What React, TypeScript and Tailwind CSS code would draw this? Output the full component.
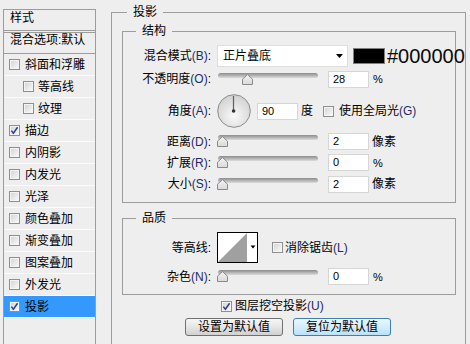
import React from "react";

function Check({ checked }: { checked?: boolean }) {
  return (
    <svg width="11" height="11" viewBox="0 0 11 11" className="shrink-0 block">
      <defs>
        <linearGradient id="cbg" x1="0" y1="0" x2="1" y2="1">
          <stop offset="0" stopColor="#d6d6d6" />
          <stop offset="1" stopColor="#f7f7f7" />
        </linearGradient>
      </defs>
      <rect x="0.5" y="0.5" width="10" height="10" fill="#f4f4f4" stroke="#8e8f8f" />
      <rect x="2" y="2" width="7" height="7" fill="url(#cbg)" />
      {checked && (
        <path d="M2.3 5.6 L4.4 8.2 L8.6 2.2" fill="none" stroke="#2b3f8f" strokeWidth="1.5" />
      )}
    </svg>
  );
}

function Thumb() {
  return (
    <svg width="11" height="11" viewBox="0 0 11 11" className="block">
      <defs>
        <linearGradient id="thg" x1="0" y1="0" x2="0" y2="1">
          <stop offset="0" stopColor="#f4f4f4" />
          <stop offset="1" stopColor="#d9d9d9" />
        </linearGradient>
      </defs>
      <path d="M5.5 0.6 L10.5 5.2 L10.5 10.5 L0.5 10.5 L0.5 5.2 Z" fill="url(#thg)" stroke="#8a8a8a" />
    </svg>
  );
}

function Slider({ value }: { value: number }) {
  return (
    <div className="relative w-[102px] h-[13px] shrink-0">
      <div className="mx-[1px] h-[5px] rounded-full bg-linear-to-b from-[#8c8c8c] to-[#dcdcdc]" />
      <div className="absolute top-[1px]" style={{ left: Math.round((value / 100) * 89) }}>
        <Thumb />
      </div>
    </div>
  );
}

function Field({ v }: { v: string }) {
  return (
    <div className="w-[41px] h-[17px] bg-white border border-[#d6d6d6] pl-[4px] flex items-center text-[11px] leading-none shrink-0">
      {v}
    </div>
  );
}

function L({ zh, k }: { zh: string; k?: string }) {
  return (
    <span className="whitespace-nowrap">
      {zh}
      {k && <span className="text-[#1c2a66]">({k})</span>}
      {k !== undefined || true ? ":" : ""}
    </span>
  );
}

function Lbl({ zh, k }: { zh: string; k?: string }) {
  return (
    <div className="w-[88px] text-right whitespace-nowrap shrink-0">
      {zh}
      {k && <span className="text-[#1c2a66]">({k})</span>}:
    </div>
  );
}

const listItems: { t: string; c?: boolean; indent?: boolean; sel?: boolean }[] = [
  { t: "斜面和浮雕" },
  { t: "等高线", indent: true },
  { t: "纹理", indent: true },
  { t: "描边", c: true },
  { t: "内阴影" },
  { t: "内发光" },
  { t: "光泽" },
  { t: "颜色叠加" },
  { t: "渐变叠加" },
  { t: "图案叠加" },
  { t: "外发光" },
  { t: "投影", c: true, sel: true },
];

export default function App() {
  void L;
  return (
    <div className="w-[470px] h-[344px] overflow-hidden bg-[#eeeeee] flex items-start text-[12px] leading-[16px] text-black font-['Liberation_Sans','Noto_Sans_CJK_SC',sans-serif]">
      {/* left style list */}
      <div className="ml-[3px] mt-[9px] w-[93px] h-[400px] border border-[#9c9c9c] flex flex-col shrink-0">
        <div className="h-[23px] border-b-[3px] border-double border-[#9c9c9c] pl-[6px] pt-[1px] leading-[14px] text-[12px]">
          样式
        </div>
        <div className="h-[21px] border-b border-[#9c9c9c] pl-[6px] pt-[1px] leading-[12px] whitespace-nowrap">
          混合选项:默认
        </div>
        {listItems.map((it) => (
          <div
            key={it.t}
            className={
              "h-[22px] border-b border-[#fbfbfb] flex items-center " +
              (it.indent ? "pl-[19px] " : "pl-[5px] ") +
              (it.sel ? "bg-[#3399ff]" : "")
            }
          >
            <Check checked={it.c} />
            <span className={it.indent ? "ml-[4px]" : "ml-[5px]"}>{it.t}</span>
          </div>
        ))}
      </div>

      {/* right main group */}
      <fieldset className="ml-[15px] mt-[4px] w-[355px] h-[400px] border border-[#9c9c9c] pl-[10px] pr-[9px] shrink-0 min-w-0">
        <legend className="ml-[5px] px-[6px] leading-[16px]">投影</legend>

        <fieldset className="mt-[3px] border border-[#9c9c9c] min-w-0">
          <legend className="ml-[13px] px-[6px] leading-[16px]">结构</legend>
          <div className="flex flex-col pt-[6px] pb-[7px]">
            <div className="h-[22px] flex items-center">
              <Lbl zh="混合模式" k="B" />
              <div className="ml-[6px] w-[131px] h-[22px] bg-white border border-[#dedede] flex items-center justify-between pl-[5px] pr-[4px] shrink-0">
                <span>正片叠底</span>
                <svg width="7" height="4" viewBox="0 0 7 4" className="block">
                  <path d="M0 0H7L3.5 4Z" fill="#000" />
                </svg>
              </div>
              <div className="ml-[5px] w-[32px] h-[16px] bg-black border border-[#808080] shrink-0" />
              <span className="ml-[2px] text-[20px] leading-[20px] whitespace-nowrap text-[#0a0a0a]">#000000</span>
            </div>

            <div className="mt-[1px] h-[22px] flex items-center">
              <Lbl zh="不透明度" k="O" />
              <div className="ml-[6px] flex items-center">
                <Slider value={28} />
                <div className="ml-[9px]">
                  <Field v="28" />
                </div>
                <span className="ml-[4px] text-[11px]">%</span>
              </div>
            </div>

            <div className="mt-[4px] h-[34px] flex items-center">
              <Lbl zh="角度" k="A" />
              <div className="ml-[6px] flex items-center">
                <svg width="34" height="34" viewBox="0 0 34 34" className="block shrink-0">
                  <defs>
                    <radialGradient id="dialg" cx="0.5" cy="0.65" r="0.6">
                      <stop offset="0" stopColor="#fafafa" />
                      <stop offset="1" stopColor="#d3d3d3" />
                    </radialGradient>
                  </defs>
                  <circle cx="17" cy="17" r="16.3" fill="url(#dialg)" stroke="#8c8c8c" />
                  <line x1="16.5" y1="2" x2="16.5" y2="17" stroke="#5e5e5e" strokeWidth="1.2" />
                  <circle cx="16.6" cy="17" r="1.8" fill="#333" />
                </svg>
                <div className="ml-[6px]">
                  <Field v="90" />
                </div>
                <span className="ml-[3px]">度</span>
                <div className="ml-[10px]">
                  <Check />
                </div>
                <span className="ml-[5px] whitespace-nowrap">
                  使用全局光<span className="text-[#1c2a66]">(G)</span>
                </span>
              </div>
            </div>

            <div className="mt-[3px] h-[21px] flex items-center">
              <Lbl zh="距离" k="D" />
              <div className="ml-[6px] flex items-center">
                <Slider value={0} />
                <div className="ml-[9px]">
                  <Field v="2" />
                </div>
                <span className="ml-[3px]">像素</span>
              </div>
            </div>

            <div className="h-[21px] flex items-center">
              <Lbl zh="扩展" k="R" />
              <div className="ml-[6px] flex items-center">
                <Slider value={0} />
                <div className="ml-[9px]">
                  <Field v="0" />
                </div>
                <span className="ml-[4px] text-[11px]">%</span>
              </div>
            </div>

            <div className="h-[22px] flex items-center">
              <Lbl zh="大小" k="S" />
              <div className="ml-[6px] flex items-center">
                <Slider value={0} />
                <div className="ml-[9px]">
                  <Field v="2" />
                </div>
                <span className="ml-[3px]">像素</span>
              </div>
            </div>
          </div>
        </fieldset>

        <fieldset className="mt-[7px] border border-[#9c9c9c] min-w-0">
          <legend className="ml-[13px] px-[6px] leading-[16px]">品质</legend>
          <div className="flex flex-col pt-[6px] pb-[7px]">
            <div className="h-[31px] flex items-center">
              <Lbl zh="等高线" />
              <div className="ml-[6px] flex items-center">
                <svg width="41" height="31" viewBox="0 0 41 31" className="block shrink-0">
                  <rect x="0.5" y="0.5" width="40" height="30" fill="#fff" stroke="#000" />
                  <polygon points="1,30 30,1 30,30" fill="#a0a0a0" />
                  <path d="M33.5 13.5H38.5L36 16.5Z" fill="#000" />
                </svg>
                <div className="ml-[14px]">
                  <Check />
                </div>
                <span className="ml-[2px] whitespace-nowrap">
                  消除锯齿<span className="text-[#1c2a66]">(L)</span>
                </span>
              </div>
            </div>

            <div className="mt-[3px] h-[21px] flex items-center">
              <Lbl zh="杂色" k="N" />
              <div className="ml-[6px] flex items-center">
                <Slider value={0} />
                <div className="ml-[9px]">
                  <Field v="0" />
                </div>
                <span className="ml-[4px] text-[11px]">%</span>
              </div>
            </div>
          </div>
        </fieldset>

        <div className="h-[22px] flex items-center pl-[99px]">
          <Check checked />
          <span className="ml-[3px] whitespace-nowrap">
            图层挖空投影<span className="text-[#1c2a66]">(U)</span>
          </span>
        </div>

        <div className="mt-[1px] flex pl-[63px] gap-[10px]">
          <button className="w-[98px] h-[18px] border border-[#707070] rounded-[3px] bg-linear-to-b from-[#f6f6f6] via-[#e6e6e6] to-[#d0d0d0] text-[12px] leading-none text-black flex items-center justify-center">
            设置为默认值
          </button>
          <button className="w-[98px] h-[18px] border border-[#3c7fb1] rounded-[3px] bg-linear-to-b from-[#eaf6fd] via-[#d4eefb] to-[#b8e2fa] text-[12px] leading-none text-black flex items-center justify-center">
            复位为默认值
          </button>
        </div>
      </fieldset>
    </div>
  );
}
